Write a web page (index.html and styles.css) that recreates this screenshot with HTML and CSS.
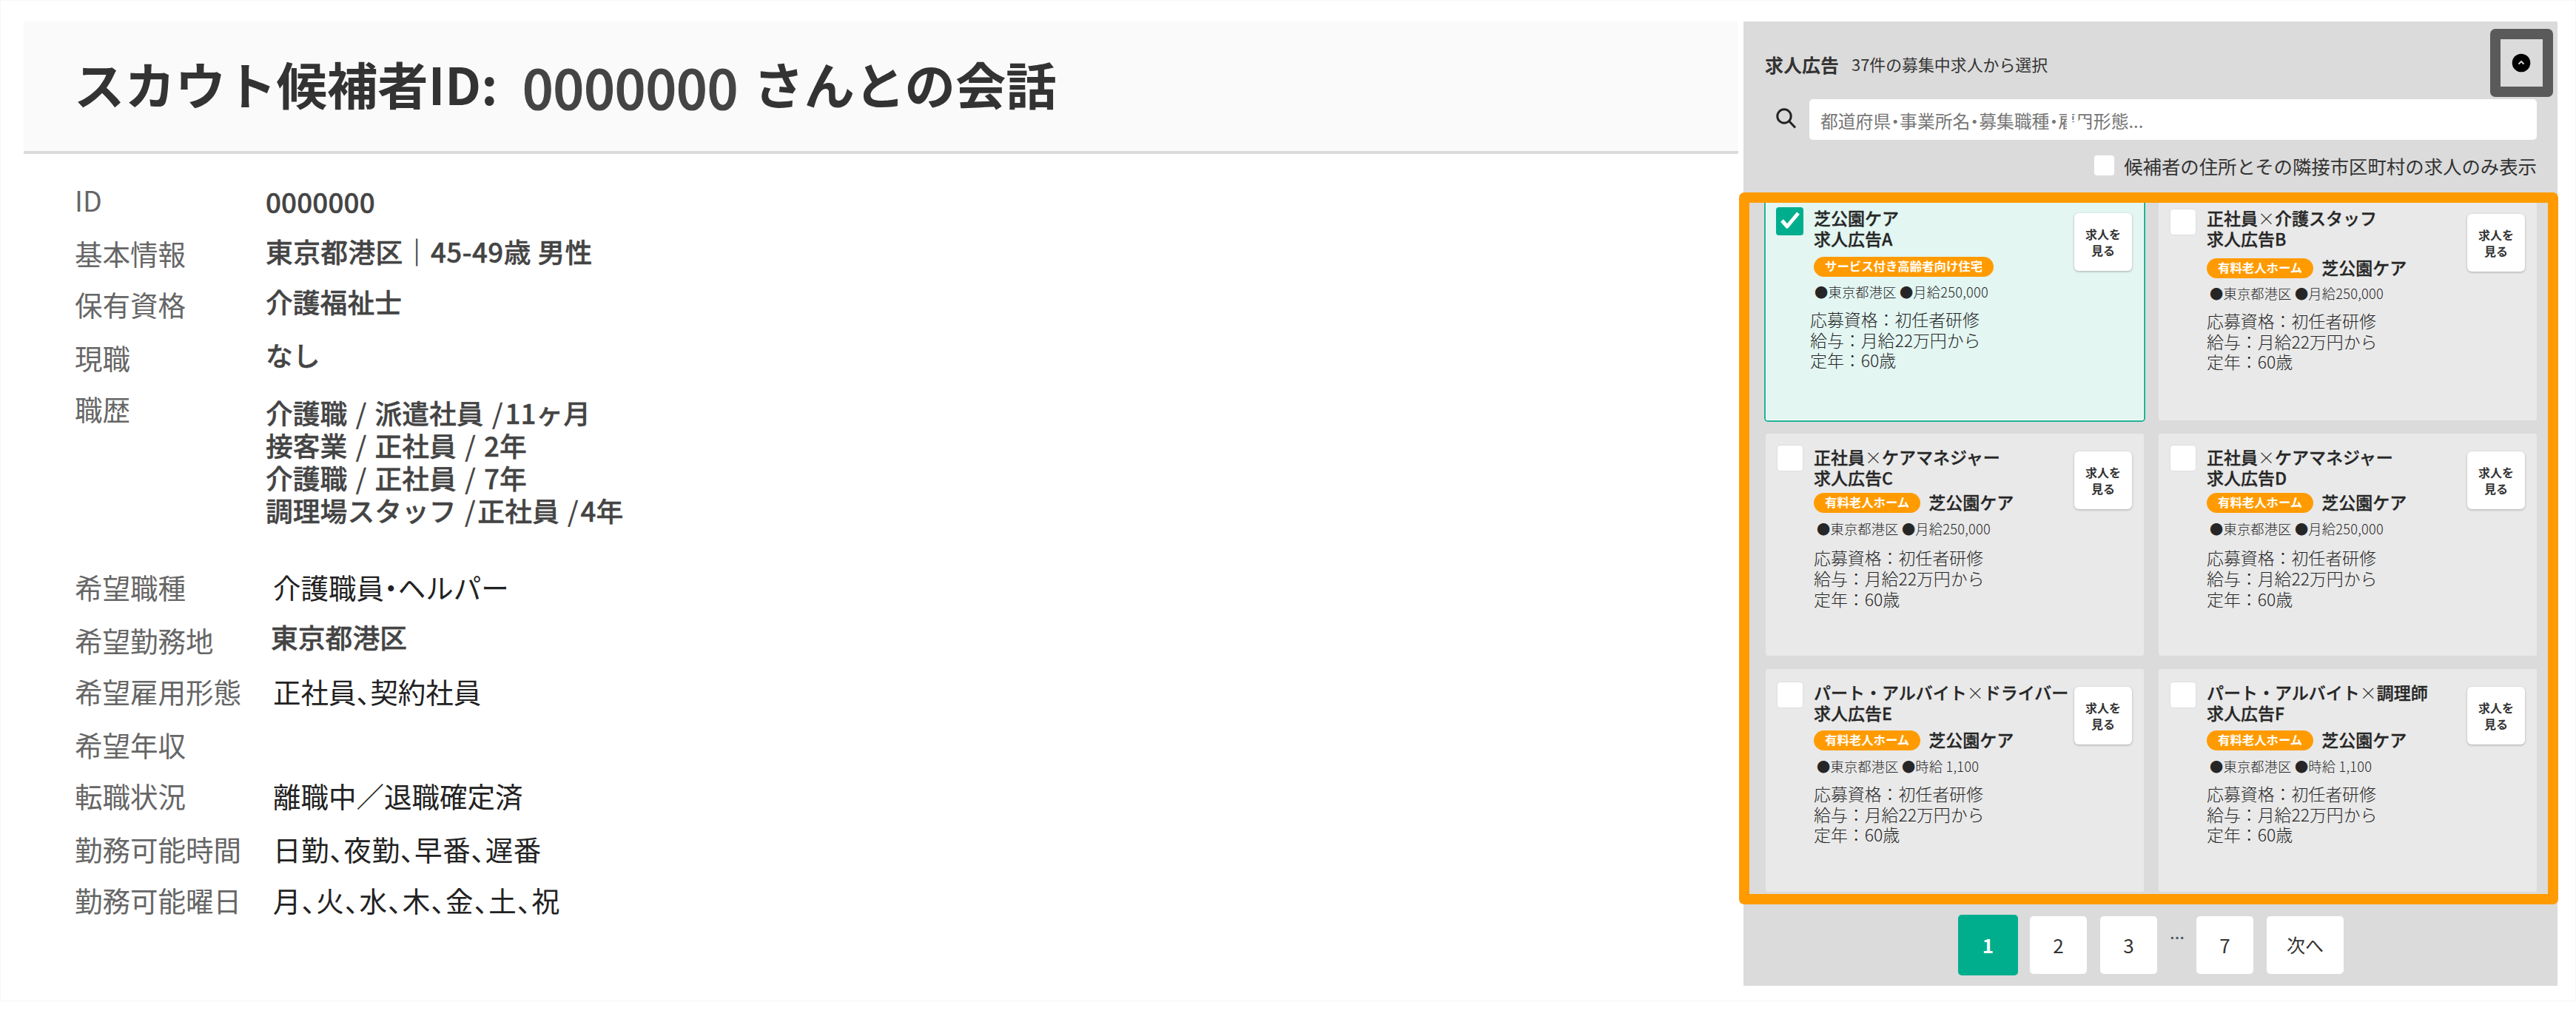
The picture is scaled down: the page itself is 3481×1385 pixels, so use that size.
FILE: index.html
```html
<!DOCTYPE html>
<html lang="ja">
<head>
<meta charset="utf-8">
<title>スカウト候補者との会話</title>
<link rel="stylesheet" href="styles.css">
</head>
<body>
<div class="page">
  <main class="talk">
    <header class="talk-head">
      <h1 class="talk-title"><span class="t-lead">スカウト候補者ID:</span><span class="t-id">0000000</span><span class="t-tail">さんとの会話</span></h1>
    </header>
    <dl class="profile">
      <div class="row row-l"><dt>ID</dt><dd class="strong id-value">0000000</dd></div>
      <div class="row row-s"><dt>基本情報</dt><dd class="strong basic">東京都港区｜45-49歳 男性</dd></div>
      <div class="row row-l"><dt>保有資格</dt><dd class="strong up">介護福祉士</dd></div>
      <div class="row row-s"><dt>現職</dt><dd class="strong up">なし</dd></div>
      <div class="row row-history"><dt>職歴</dt><dd class="strong history">介護職 <i>/</i> 派遣社員 <i>/</i>11ヶ月<br>接客業 <i>/</i> 正社員 <i>/</i> 2年<br>介護職 <i>/</i> 正社員 <i>/</i> 7年<br>調理場スタッフ <i>/</i>正社員 <i>/</i>4年</dd></div>
      <div class="row row-l"><dt>希望職種</dt><dd class="plain tight">介護職員・ヘルパー</dd></div>
      <div class="row row-s"><dt>希望勤務地</dt><dd class="strong place">東京都港区</dd></div>
      <div class="row row-l"><dt>希望雇用形態</dt><dd class="plain tight">正社員、契約社員</dd></div>
      <div class="row row-s"><dt>希望年収</dt><dd class="plain"></dd></div>
      <div class="row row-l"><dt>転職状況</dt><dd class="plain">離職中／退職確定済</dd></div>
      <div class="row row-s"><dt>勤務可能時間</dt><dd class="plain tight hours">日勤、夜勤、早番、遅番</dd></div>
      <div class="row row-s"><dt>勤務可能曜日</dt><dd class="plain tight days">月、火、水、木、金、土、祝</dd></div>
    </dl>
  </main>

  <aside class="ads">
    <header class="ads-head">
      <h2 class="ads-title">求人広告</h2>
      <p class="ads-count">37件の募集中求人から選択</p>
      <button class="collapse" aria-label="閉じる"><svg width="26" height="26" viewBox="0 0 26 26"><circle cx="13" cy="13" r="12.3" fill="#000"/><path d="M9.5 14.5l3.5-3.5 3.500 3.500" fill="none" stroke="#ddd" stroke-width="1.800"/></svg></button>
    </header>
    <div class="search">
      <svg class="search-icon" width="30" height="30" viewBox="0 0 30 30" fill="none" stroke="#222" stroke-width="3"><circle cx="12" cy="12" r="9.2"/><path d="M18.5 18.5l8.5 9"/></svg>
      <div class="search-box tight">都道府県・事業所名・募集職種・雇用形態...</div>
    </div>
    <div class="near"><span class="check check-near"></span>候補者の住所とその隣接市区町村の求人のみ表示</div>

    <section class="frame">
      <div class="cards">
        <article class="card row1 selected">
          <span class="check on"><svg width="37" height="38" viewBox="0 0 37 38"><path d="M8 18l7 8 15-18" fill="none" stroke="#fff" stroke-width="5" stroke-linejoin="round"/></svg></span>
          <div class="body">
            <h3>芝公園ケア<br>求人広告A</h3>
            <p class="kind"><span class="tag">サービス付き高齢者向け住宅</span></p>
            <p class="meta">●東京都港区 ●月給250,000</p>
            <p class="detail">応募資格：初任者研修<br>給与：月給22万円から<br>定年：60歳</p>
          </div>
          <button class="view">求人を<br>見る</button>
        </article>
        <article class="card row1">
          <span class="check"></span>
          <div class="body">
            <h3>正社員<b>×</b>介護スタッフ<br>求人広告B</h3>
            <p class="kind"><span class="tag">有料老人ホーム</span><span class="name">芝公園ケア</span></p>
            <p class="meta">●東京都港区 ●月給250,000</p>
            <p class="detail">応募資格：初任者研修<br>給与：月給22万円から<br>定年：60歳</p>
          </div>
          <button class="view">求人を<br>見る</button>
        </article>
        <article class="card row2">
          <span class="check"></span>
          <div class="body">
            <h3>正社員<b>×</b>ケアマネジャー<br>求人広告C</h3>
            <p class="kind"><span class="tag">有料老人ホーム</span><span class="name">芝公園ケア</span></p>
            <p class="meta">●東京都港区 ●月給250,000</p>
            <p class="detail">応募資格：初任者研修<br>給与：月給22万円から<br>定年：60歳</p>
          </div>
          <button class="view">求人を<br>見る</button>
        </article>
        <article class="card row2">
          <span class="check"></span>
          <div class="body">
            <h3>正社員<b>×</b>ケアマネジャー<br>求人広告D</h3>
            <p class="kind"><span class="tag">有料老人ホーム</span><span class="name">芝公園ケア</span></p>
            <p class="meta">●東京都港区 ●月給250,000</p>
            <p class="detail">応募資格：初任者研修<br>給与：月給22万円から<br>定年：60歳</p>
          </div>
          <button class="view">求人を<br>見る</button>
        </article>
        <article class="card row3">
          <span class="check"></span>
          <div class="body">
            <h3>パート・アルバイト<b>×</b>ドライバー<br>求人広告E</h3>
            <p class="kind"><span class="tag">有料老人ホーム</span><span class="name">芝公園ケア</span></p>
            <p class="meta">●東京都港区 ●時給 1,100</p>
            <p class="detail">応募資格：初任者研修<br>給与：月給22万円から<br>定年：60歳</p>
          </div>
          <button class="view">求人を<br>見る</button>
        </article>
        <article class="card row3">
          <span class="check"></span>
          <div class="body">
            <h3>パート・アルバイト<b>×</b>調理師<br>求人広告F</h3>
            <p class="kind"><span class="tag">有料老人ホーム</span><span class="name">芝公園ケア</span></p>
            <p class="meta">●東京都港区 ●時給 1,100</p>
            <p class="detail">応募資格：初任者研修<br>給与：月給22万円から<br>定年：60歳</p>
          </div>
          <button class="view">求人を<br>見る</button>
        </article>
      </div>
    </section>

    <nav class="pager">
      <a class="pg current">1</a><a class="pg">2</a><a class="pg">3</a><span class="dots">…</span><a class="pg">7</a><a class="pg next">次へ</a>
    </nav>
  </aside>
</div>
</body>
</html>
```
FILE: styles.css
```css
* { box-sizing: border-box; margin: 0; padding: 0; }
body {
  background: #fff;
  color: #333;
  font-family: "Noto Sans CJK JP", sans-serif;
}
.page {
  display: flex;
  width: 3481px;
  height: 1353px;
  padding: 28px 24px 0 31px;
  border: 1px solid #f7f7f7;
}
.tight { font-feature-settings: "halt"; }

/* conversation */
.talk { width: 2317px; }
.talk-head {
  height: 179px;
  background: #fafafa;
  border-bottom: 4px solid #dcdcdc;
}
.talk-title {
  display: flex;
  padding-left: 68px;
  font-size: 68.4px;
  line-height: 167px;
  font-weight: 700;
  white-space: nowrap;
}
.t-lead { width: 606px; }
.t-id { width: 312px; font-size: 73px; font-weight: 500; color: #444; padding-top: 4px; -webkit-text-stroke: 1.2px #444; }

.profile { padding: 34px 0 0 69px; }
.row { display: flex; line-height: 56px; font-size: 37.5px; }
.row-l { height: 72px; }
.row-s { height: 69.2px; }
.row-history { height: 240.5px; }
.row dt { width: 258px; color: #666; white-space: nowrap; }
.row dd { white-space: nowrap; }
.strong { font-size: 36.8px; font-weight: 500; color: #444; -webkit-text-stroke: .4px #444; }
.plain { padding-left: 10px; color: #222; }
.id-value { margin-top: 2px; letter-spacing: .15px; }
.basic { margin-top: -3px; letter-spacing: .35px; }
.up { margin-top: -4px; }
.place { padding-left: 7px; margin-top: -5px; }
.hours { letter-spacing: .6px; }
.days { letter-spacing: 1px; }
.history { line-height: 44px; padding-top: 11px; }
.history i { display: inline-block; width: 20.5px; text-align: center; font-style: normal; font-weight: 400; }

/* job ads */
.ads {
  width: 1100px;
  height: 1303px;
  margin-left: 7px;
  background: #dbdbdb;
}
.ads-head {
  display: flex;
  align-items: flex-start;
  height: 105px;
  padding: 10px 6px 0 29px;
}
.ads-title { font-size: 25px; line-height: 96px; width: 117px; }
.ads-count { font-size: 21.9px; line-height: 96px; }
.collapse {
  display: grid;
  place-items: center;
  width: 85px;
  height: 92px;
  margin-left: auto;
  border: 14px solid #5a5a5a;
  border-radius: 7px;
  background: #dbdbdb;
}
.collapse svg { margin-right: 2px; }
.search { display: flex; height: 55px; padding-left: 43px; }
.search-icon { margin: 11px 16px 0 0; }
.search-box {
  position: relative;
  width: 983px;
  height: 55px;
  padding-left: 15px;
  border-radius: 5px;
  background: #fff;
  color: #777;
  font-size: 23.8px;
  line-height: 57px;
  white-space: nowrap;
}
/* faded notch in the placeholder */
.search-box::after {
  content: "";
  position: absolute;
  left: 348px;
  top: 12px;
  width: 30px;
  height: 34px;
  background: #fff;
  clip-path: polygon(0 0, 24% 0, 24% 55%, 45% 62%, 62% 40%, 90% 46%, 90% 100%, 0 100%);
}
.near {
  display: flex;
  align-items: center;
  justify-content: flex-end;
  height: 71px;
  padding: 0 28px 2px 0;
  font-size: 25.4px;
  white-space: nowrap;
}
.check-near.check { width: 27px; height: 27px; margin: 0 13px 0 0; }

.frame {
  width: 1107px;
  height: 962px;
  margin-left: -6px;
  overflow: hidden;
  border: 14px solid #ff9b00;
  border-radius: 7px;
  background: #dbdbdb;
}
.cards {
  display: grid;
  grid-template-columns: 511px 511px;
  grid-auto-rows: 300.5px;
  gap: 18px 20px;
  margin: -7px 0 0 22px;
}
.card {
  display: flex;
  align-items: flex-start;
  padding-right: 16px;
  border-radius: 3px;
  background: #e9e9e9;
  color: #262626;
}
.selected { background: #e3f6f2; box-shadow: 0 0 0 2px #1cb496, inset 0 0 0 1px #fff; }
.check {
  flex: none;
  width: 34px;
  height: 34px;
  margin: 16px 0 0 16px;
  border-radius: 4px;
  background: #fff;
  box-shadow: 0 0 1px 1px #dedede;
}
.row3 .check { margin-top: 18px; }
.check.on { width: 37px; height: 38px; margin: 13px -2px 0 14px; background: #00ae8d; box-shadow: none; }
.body { flex: 1; min-width: 0; padding: 17px 0 0 15px; white-space: nowrap; }
.row1 .body { padding-top: 13px; }
.selected .body { padding-left: 16px; }
.body h3 { font-size: 23px; line-height: 28.4px; font-weight: 500; -webkit-text-stroke: .35px #262626; }
.body h3 b { display: inline-block; width: 23px; text-align: center; font-weight: 300; -webkit-text-stroke: 0; }
.kind { display: flex; height: 27px; margin-top: 7px; }
.row1 .kind { margin-top: 12px; }
.row1.selected .kind { margin-top: 10px; }
.row3 .kind { margin-top: 9px; }
.tag {
  padding: 0 15px 0 15px;
  border-radius: 14px;
  background: #ff9b00;
  color: #fff;
  font-size: 16.4px;
  font-weight: 700;
  line-height: 25px;
}
.name { margin-left: 11px; font-size: 23px; font-weight: 500; line-height: 25px; -webkit-text-stroke: .35px #262626; }
.meta { margin: 9px 0 0 4px; font-size: 18.2px; font-weight: 300; line-height: 24px; letter-spacing: .25px; }
.detail { margin-top: 14px; font-size: 22.9px; font-weight: 300; line-height: 27.7px; }
.row1 .meta { margin-top: 8px; }
.row1 .detail { margin-top: 12px; }
.row3 .detail { margin-top: 12px; }
.selected .meta { margin-left: 1px; margin-top: 8px; }
.selected .detail { margin-left: -5px; }
.view {
  flex: none;
  width: 78px;
  height: 78px;
  margin-top: 24px;
  border: 0;
  border-radius: 6px;
  background: #fff;
  box-shadow: 0 1px 3px #aaa;
  color: #333;
  font: 700 16px/22px "Noto Sans CJK JP", sans-serif;
}
.row1 .view { margin-top: 22px; }
.selected .view { margin-top: 21px; }

/* pagination */
.pager { display: flex; align-items: center; padding: 14px 0 0 290px; }
.pg {
  width: 77px;
  height: 78px;
  margin-right: 18px;
  border-radius: 5px;
  background: #fff;
  font-size: 26px;
  line-height: 77px;
  text-align: center;
}
.current { width: 81px; height: 82px; line-height: 81px; margin-right: 16px; background: #00ae8d; color: #fff; font-weight: 700; }
.dots { width: 20px; margin: -22px 16px 0 -1px; color: #456; font-size: 20px; font-weight: 700; }
.next { width: 104px; font-size: 25px; }
```
